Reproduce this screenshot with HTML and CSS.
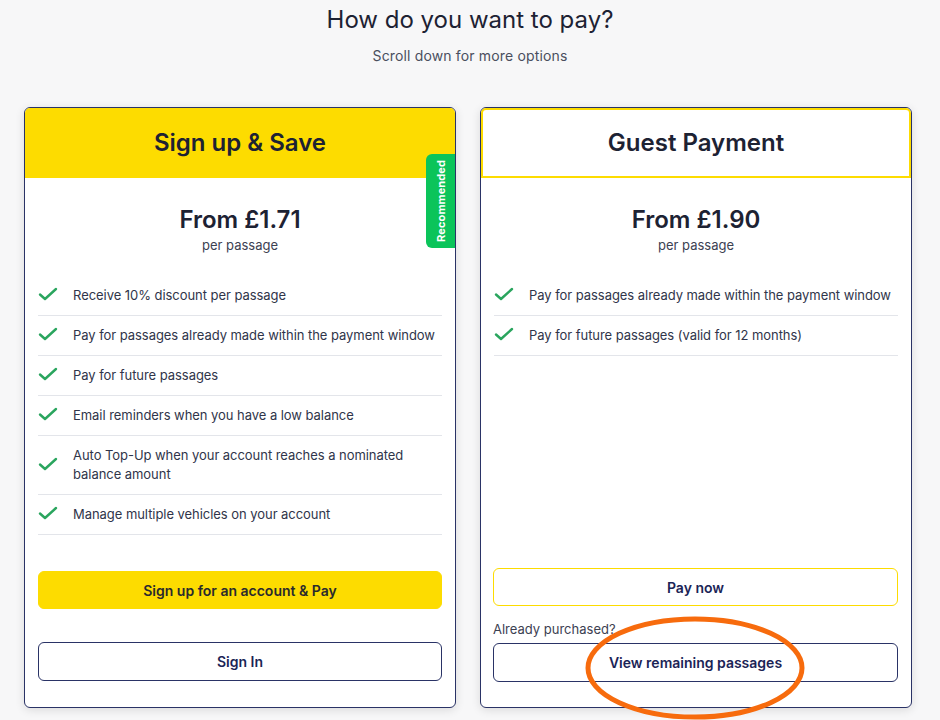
FILE: index.html
```html
<!DOCTYPE html>
<html lang="en">
<head>
<meta charset="utf-8">
<title>How do you want to pay?</title>
<link rel="stylesheet" href="styles.css">
</head>
<body>
<main class="page">
  <h1 class="title">How do you want to pay?</h1>
  <p class="subtitle">Scroll down for more options</p>

  <div class="cards">
    <section class="card">
      <header class="card-head card-head--yellow"><h2>Sign up &amp; Save</h2></header>
      <div class="badge"><span>Recommended</span></div>
      <div class="price">
        <div class="price-amount">From £1.71</div>
        <div class="price-unit">per passage</div>
      </div>
      <ul class="features">
        <li><svg class="tick" viewBox="0 0 20 14"><path d="M2 7.5l5 4.5L18 2"/></svg><span>Receive 10% discount per passage</span></li>
        <li><svg class="tick" viewBox="0 0 20 14"><path d="M2 7.5l5 4.5L18 2"/></svg><span>Pay for passages already made within the payment window</span></li>
        <li><svg class="tick" viewBox="0 0 20 14"><path d="M2 7.5l5 4.5L18 2"/></svg><span>Pay for future passages</span></li>
        <li><svg class="tick" viewBox="0 0 20 14"><path d="M2 7.5l5 4.5L18 2"/></svg><span>Email reminders when you have a low balance</span></li>
        <li><svg class="tick" viewBox="0 0 20 14"><path d="M2 7.5l5 4.5L18 2"/></svg><span>Auto Top-Up when your account reaches a nominated balance amount</span></li>
        <li><svg class="tick" viewBox="0 0 20 14"><path d="M2 7.5l5 4.5L18 2"/></svg><span>Manage multiple vehicles on your account</span></li>
      </ul>
      <div class="card-foot card-foot--left">
        <button class="btn btn--yellow">Sign up for an account &amp; Pay</button>
        <button class="btn btn--outline">Sign In</button>
      </div>
    </section>

    <section class="card">
      <header class="card-head card-head--outline"><h2>Guest Payment</h2></header>
      <div class="price">
        <div class="price-amount">From £1.90</div>
        <div class="price-unit">per passage</div>
      </div>
      <ul class="features">
        <li><svg class="tick" viewBox="0 0 20 14"><path d="M2 7.5l5 4.5L18 2"/></svg><span>Pay for passages already made within the payment window</span></li>
        <li><svg class="tick" viewBox="0 0 20 14"><path d="M2 7.5l5 4.5L18 2"/></svg><span>Pay for future passages (valid for 12 months)</span></li>
      </ul>
      <div class="card-foot card-foot--right">
        <button class="btn btn--yellow-outline">Pay now</button>
        <p class="already">Already purchased?</p>
        <button class="btn btn--outline">View remaining passages</button>
      </div>
    </section>
  </div>

  <svg class="annotation" viewBox="0 0 224 108" width="224" height="108">
    <ellipse cx="112" cy="54" rx="107" ry="49"/>
  </svg>
</main>
</body>
</html>
```

FILE: styles.css
```css
* { box-sizing: border-box; }

html, body {
  margin: 0;
  padding: 0;
}

body {
  background: #f7f7f8;
  font-family: Inter, "Noto Sans", "Liberation Sans", sans-serif;
  color: #1d2233;
  width: 940px;
  height: 720px;
  overflow: hidden;
}

.page {
  position: relative;
  width: 940px;
  height: 720px;
}

.title {
  margin: 0;
  padding-top: 5px;
  font-size: 24px;
  line-height: 30px;
  font-weight: 400;
  text-align: center;
  color: #1d2233;
}

.subtitle {
  margin: 11px 0 0;
  font-size: 14px;
  line-height: 20px;
  text-align: center;
  color: #4a4f5e;
  letter-spacing: 0.15px;
}

.cards {
  display: grid;
  grid-template-columns: 432px 432px;
  column-gap: 24px;
  padding-left: 24px;
  margin-top: 41px;
}

.card {
  position: relative;
  height: 601px;
  background: #fff;
  border: 1px solid #2a3366;
  border-radius: 6px;
  box-shadow: 0 2px 10px rgba(0, 0, 0, 0.12);
  display: flex;
  flex-direction: column;
}

.card-head {
  height: 70px;
  padding-bottom: 1px;
  display: flex;
  align-items: center;
  justify-content: center;
  border-radius: 5px 5px 0 0;
}

.card-head h2 {
  margin: 0;
  font-size: 24px;
  line-height: 30px;
  font-weight: 600;
  color: #1d2233;
}

.card-head--yellow {
  background: #fddc00;
}

.card-head--outline {
  background: #fff;
  border: 2px solid #fddc00;
}

.badge {
  position: absolute;
  top: 46px;
  right: 0;
  width: 29px;
  height: 94px;
  background: #0bc45a;
  border-radius: 6px 0 0 6px;
  display: flex;
  align-items: center;
  justify-content: center;
}

.badge span {
  writing-mode: vertical-rl;
  transform: rotate(180deg);
  color: #fff;
  font-size: 11px;
  font-weight: 700;
  letter-spacing: 0.1px;
}

.price {
  padding-top: 27px;
  text-align: center;
}

.price-amount {
  font-size: 24px;
  line-height: 30px;
  font-weight: 600;
  color: #1d2233;
}

.price-unit {
  margin-top: 2px;
  font-size: 13px;
  line-height: 16px;
  color: #3c4152;
}

.features {
  list-style: none;
  margin: 23px 13px 0;
  padding: 0;
}

.features li {
  display: flex;
  align-items: center;
  gap: 15px;
  padding: 10px 0;
  border-bottom: 1px solid #e3e5ea;
  font-size: 13px;
  line-height: 19px;
  color: #30354a;
  letter-spacing: -0.05px;
}

.tick {
  flex: 0 0 20px;
  width: 20px;
  height: 14px;
  margin-top: -3px;
}

.tick path {
  fill: none;
  stroke: #2aa55e;
  stroke-width: 2.4;
  stroke-linecap: round;
  stroke-linejoin: round;
}

.card-foot {
  margin-top: auto;
  padding: 0 13px 25px 12px;
  display: flex;
  flex-direction: column;
}

.card-foot--left {
  padding: 0 13px 26px;
}

.btn {
  display: block;
  width: 100%;
  border-radius: 6px;
  font-family: inherit;
  font-size: 14px;
  font-weight: 600;
  text-align: center;
  cursor: pointer;
}

.btn--yellow {
  height: 38px;
  background: #fddc00;
  border: 1px solid #fddc00;
  color: #2a2a2e;
}

.card-foot--left .btn--outline {
  margin-top: 33px;
}

.btn--outline {
  height: 39px;
  background: #fff;
  border: 1px solid #2a3366;
  color: #1b2456;
}

.btn--yellow-outline {
  height: 38px;
  background: #fff;
  border: 1px solid #fddc00;
  color: #1b2456;
}

.already {
  margin: 15px 0 6px;
  font-size: 13px;
  line-height: 16px;
  color: #3c4152;
}

.annotation {
  position: absolute;
  left: 583px;
  top: 614px;
  overflow: visible;
}

.annotation ellipse {
  fill: none;
  stroke: #f76b0d;
  stroke-width: 5;
}
```
